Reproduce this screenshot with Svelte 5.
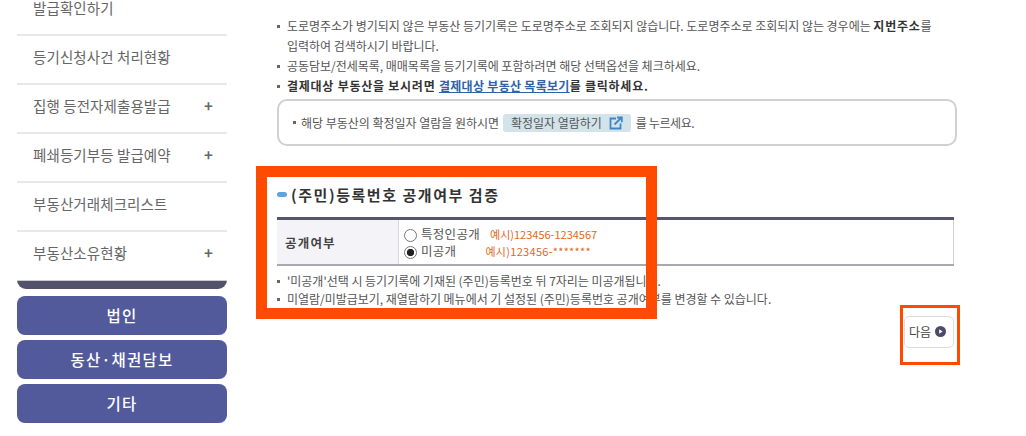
<script>
  const menu = [
    { label: '등기신청사건 처리현황' },
    { label: '집행 등전자제출용발급', plus: true },
    { label: '폐쇄등기부등 발급예약', plus: true },
    { label: '부동산거래체크리스트' },
    { label: '부동산소유현황', plus: true }
  ];
  const groups = ['법인', '동산·채권담보', '기타'];
</script>

<div class="page">
  <aside class="sidebar">
    <div class="menu-item first"><span>발급확인하기</span></div>
    {#each menu as item}
      <div class="menu-item">
        <span>{item.label}</span>
        {#if item.plus}<b class="plus">+</b>{/if}
      </div>
    {/each}
    <div class="menu-end"></div>
    {#each groups as group}
      <div class="group">{group}</div>
    {/each}
  </aside>

  <main class="content">
    <ul class="notes top">
      <li>도로명주소가 병기되지 않은 부동산 등기기록은 도로명주소로 조회되지 않습니다. 도로명주소로 조회되지 않는 경우에는 <strong>지번주소</strong>를<br />입력하여 검색하시기 바랍니다.</li>
      <li>공동담보/전세목록, 매매목록을 등기기록에 포함하려면 해당 선택옵션을 체크하세요.</li>
      <li><strong>결제대상 부동산을 보시려면 <a href="#list">결제대상 부동산 목록보기</a>를 클릭하세요.</strong></li>
    </ul>

    <div class="notice">
      <span class="dot"></span>
      <span>해당 부동산의 확정일자 열람을 원하시면</span>
      <span class="chip">
        확정일자 열람하기
        <svg width="14" height="14" viewBox="0 0 14 14" fill="none" stroke="#3f87c4" stroke-width="1.8">
          <path d="M7 2.5H1.5v10h10V7.5" />
          <path d="M5.5 8.5 12 2M8 1.5h4.8v4.8" />
        </svg>
      </span>
      <span class="press">를 누르세요.</span>
    </div>

    <h3 class="title"><i class="pill"></i>(주민)등록번호 공개여부 검증</h3>

    <table class="form">
      <tbody>
        <tr>
          <th>공개여부</th>
          <td>
            <div class="radio-row">
              <span class="radio"></span><span class="radio-label">특정인공개</span>
              <span class="sample">예시)123456-1234567</span>
            </div>
            <div class="radio-row">
              <span class="radio on"></span><span class="radio-label">미공개</span>
              <span class="sample second">예시)123456-*******</span>
            </div>
          </td>
        </tr>
      </tbody>
    </table>

    <ul class="notes bottom">
      <li>'미공개'선택 시 등기기록에 기재된 (주민)등록번호 뒤 7자리는 미공개됩니다.</li>
      <li>미열람/미발급보기, 재열람하기 메뉴에서 기 설정된 (주민)등록번호 공개여부를 변경할 수 있습니다.</li>
    </ul>

    <div class="actions">
      <button class="next">
        다음
        <svg width="11" height="11" viewBox="0 0 11 11">
          <circle cx="5.5" cy="5.5" r="5.5" fill="#4b4b68" />
          <path d="M4.2 3.2 7.6 5.5 4.2 7.8Z" fill="#fff" />
        </svg>
      </button>
    </div>
  </main>

  <div class="mark mark-form"></div>
  <div class="mark mark-next"></div>
</div>

<style>
  :global(body) {
    margin: 0;
    background: #fff;
  }

  .page {
    position: relative;
    display: flex;
    height: 436px;
    overflow: hidden;
    font-family: "Noto Sans CJK KR", "Noto Sans", sans-serif;
    color: #555;
  }

  .sidebar {
    width: 210px;
    margin-left: 17px;
    flex: none;
  }

  .menu-item {
    display: flex;
    align-items: center;
    justify-content: space-between;
    height: 40px;
    padding: 0 16px 7px;
    border-bottom: 2px solid #e8e8e8;
    font-size: 14.5px;
    letter-spacing: 0.1px;
    color: #666;
  }

  .menu-item.first {
    height: 16px;
    padding-bottom: 18px;
    line-height: 16px;
  }

  .menu-item:nth-child(6) {
    height: 41px;
    border-bottom: 0;
  }

  .plus {
    margin-right: -2px;
    font-size: 15px;
    font-weight: 700;
    color: #666;
  }

  .menu-end {
    height: 8px;
    margin-bottom: 7px;
    border-top: 1px solid #c9c9cf;
    border-radius: 0 0 9px 9px;
    background: #54526a;
  }

  .group {
    display: flex;
    align-items: center;
    justify-content: center;
    box-sizing: border-box;
    height: 39px;
    margin-bottom: 5px;
    padding-bottom: 2px;
    border-radius: 8px;
    background: #525a9c;
    color: #fff;
    font-size: 15.5px;
    font-weight: 500;
    letter-spacing: 1.2px;
  }

  .content {
    width: 680px;
    margin-left: 50px;
    padding-top: 16px;
    font-size: 12px;
    letter-spacing: -0.02px;
  }

  .notes {
    margin: 0;
    padding: 0;
    list-style: none;
  }

  .notes li {
    position: relative;
    padding-left: 10px;
    line-height: 20px;
  }

  .notes li::before {
    content: "";
    position: absolute;
    left: 0;
    top: 9px;
    width: 3px;
    height: 3px;
    background: #666;
  }

  .notes strong {
    color: #333;
    font-weight: 700;
    letter-spacing: 0.75px;
  }

  .notes a {
    color: #2f62a8;
    letter-spacing: 0.3px;
    text-decoration: underline;
  }

  .notice {
    display: flex;
    align-items: center;
    gap: 5px;
    height: 43px;
    margin-top: 3px;
    padding-left: 14px;
    border: 2px solid #d0d0d0;
    border-radius: 10px;
  }

  .dot {
    width: 3px;
    height: 3px;
    background: #666;
  }

  .chip {
    display: flex;
    align-items: center;
    gap: 7px;
    height: 18px;
    margin: 0 0 0 -1px;
    padding: 0 8px;
    border-radius: 3px;
    background: #d3e3ea;
  }

  .press {
    letter-spacing: -0.4px;
  }

  .title {
    display: flex;
    align-items: center;
    height: 26px;
    margin: 35px 0 10px;
    font-size: 15px;
    font-weight: 700;
    letter-spacing: 1.55px;
    color: #333;
  }

  .pill {
    width: 10px;
    height: 5px;
    margin-right: 4px;
    border-radius: 3px;
    background: #5da5dc;
  }

  .form {
    width: 677px;
    height: 49px;
    border-collapse: collapse;
    border-top: 3px solid #55566e;
    border-bottom: 2px solid #a8a8b0;
    border-right: 1px solid #d0d0d6;
  }

  .form th {
    width: 113px;
    padding: 0 0 0 8px;
    border-right: 1px solid #d6d6dc;
    background: #f4f4f8;
    font-size: 12.5px;
    font-weight: 700;
    letter-spacing: 1.2px;
    text-align: left;
    color: #444;
  }

  .form td {
    padding: 0 0 0 5px;
  }

  .radio-row {
    display: flex;
    align-items: center;
    height: 17px;
  }

  .radio {
    box-sizing: border-box;
    width: 13px;
    height: 13px;
    margin: 3px 4px 0 0;
    border: 1px solid #777;
    border-radius: 50%;
    background: #fff;
  }

  .radio.on {
    background: radial-gradient(circle, #222 0 3.4px, #fff 3.9px);
  }

  .radio-label {
    font-size: 12.5px;
    letter-spacing: 0.3px;
  }

  .sample {
    margin-left: 10px;
    font-size: 11px;
    letter-spacing: 0;
    color: #e0681e;
  }

  .sample.second {
    margin-left: 29px;
    letter-spacing: 0.3px;
  }

  .notes.bottom {
    margin-top: 6px;
  }

  .notes.bottom li {
    line-height: 18px;
  }

  .notes.bottom li::before {
    top: 8px;
  }

  .actions {
    display: flex;
    justify-content: flex-end;
    width: 677px;
    margin-top: 8px;
  }

  .next {
    display: flex;
    align-items: center;
    justify-content: center;
    gap: 4px;
    box-sizing: border-box;
    width: 50px;
    height: 32px;
    padding: 0 3px 2px 0;
    border: 1px solid #dcdcdc;
    border-radius: 5px;
    background: #fff;
    font: inherit;
    font-size: 12px;
    color: #444;
  }

  .mark {
    position: absolute;
    box-sizing: border-box;
    border-style: solid;
    border-color: #ff4b00;
  }

  .mark-form {
    left: 256px;
    top: 166px;
    width: 401px;
    height: 153px;
    border-width: 11px 11.5px 11px 11px;
  }

  .mark-next {
    left: 900px;
    top: 305px;
    width: 60px;
    height: 60px;
    border-width: 3px;
  }
</style>
